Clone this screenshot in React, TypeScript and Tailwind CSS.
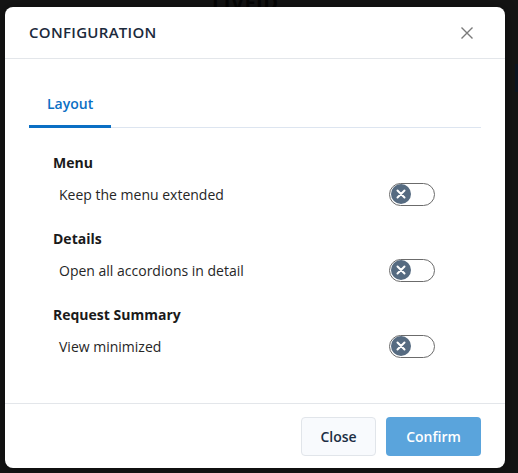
import React from "react";

function Toggle() {
  return (
    <div className="w-[46px] h-[23px] rounded-full border border-[#6b6b6b] bg-white flex items-center px-[1px]">
      <div className="w-[20px] h-[20px] rounded-full bg-[#566b81] flex items-center justify-center">
        <svg width="10" height="10" viewBox="0 0 10 10" fill="none">
          <path d="M1.5 1.5L8.5 8.5M8.5 1.5L1.5 8.5" stroke="#ffffff" strokeWidth="2" strokeLinecap="round" />
        </svg>
      </div>
    </div>
  );
}

function Section({ title, label }: { title: string; label: string }) {
  return (
    <div className="flex flex-col">
      <div className="h-[20px] leading-[20px] text-[14px] font-bold text-[#1a1a1a]">{title}</div>
      <div className="mt-[9px] h-[24px] flex items-center justify-between pr-[46px]">
        <span className="pl-[6px] text-[14px] text-[#262626]">{label}</span>
        <Toggle />
      </div>
    </div>
  );
}

export default function App() {
  return (
    <div
      className="w-full h-[473px] bg-[#141414] overflow-hidden relative"
      style={{ fontFamily: '"Open Sans", "Noto Sans", sans-serif' }}
    >
      <div className="absolute left-[212px] top-[-12px] text-[20px] font-bold text-[#050505] tracking-wide">LIVEID</div>
      <div className="absolute right-0 top-[64px] w-[3px] h-[28px] bg-[#0c1420]" />
      <div className="relative ml-[5px] mt-[7px] w-[500px] h-[461px] rounded-[8px] bg-white flex flex-col shadow-[0_0_12px_rgba(0,0,0,0.4)]">
        <div className="h-[52px] shrink-0 flex items-center justify-between pl-[24px] pr-[32px] border-b border-[#e3e6ea]">
          <span className="text-[15px] font-semibold tracking-[0.02em] text-[#1b2a3c]">CONFIGURATION</span>
          <svg width="12" height="12" viewBox="0 0 12 12" fill="none">
            <path d="M0.5 0.5L11.5 11.5M11.5 0.5L0.5 11.5" stroke="#7a7a7a" strokeWidth="1.4" />
          </svg>
        </div>
        <div className="flex-1 px-[24px] pt-[22px]">
          <div className="flex border-b border-[#dde5f0]">
            <div className="-mb-px h-[47px] px-[18px] flex items-center border-b-[3px] border-[#0b6fc4] text-[14px] font-semibold text-[#0b6fc4]">
              Layout
            </div>
          </div>
          <div className="pl-[24px] pt-[25px] flex flex-col gap-[23px]">
            <Section title="Menu" label="Keep the menu extended" />
            <Section title="Details" label="Open all accordions in detail" />
            <Section title="Request Summary" label="View minimized" />
          </div>
        </div>
        <div className="h-[65px] shrink-0 border-t border-[#e3e6ea] flex justify-end items-start pt-[13px] pr-[24px] gap-[10px]">
          <button className="w-[75px] h-[39px] rounded-[4px] bg-[#f8fafd] border border-[#e1e5ea] text-[14px] font-semibold text-[#1c2e44]">
            Close
          </button>
          <button className="w-[95px] h-[39px] rounded-[4px] bg-[#5aa4dc] text-[14px] font-semibold text-white">
            Confirm
          </button>
        </div>
      </div>
    </div>
  );
}
